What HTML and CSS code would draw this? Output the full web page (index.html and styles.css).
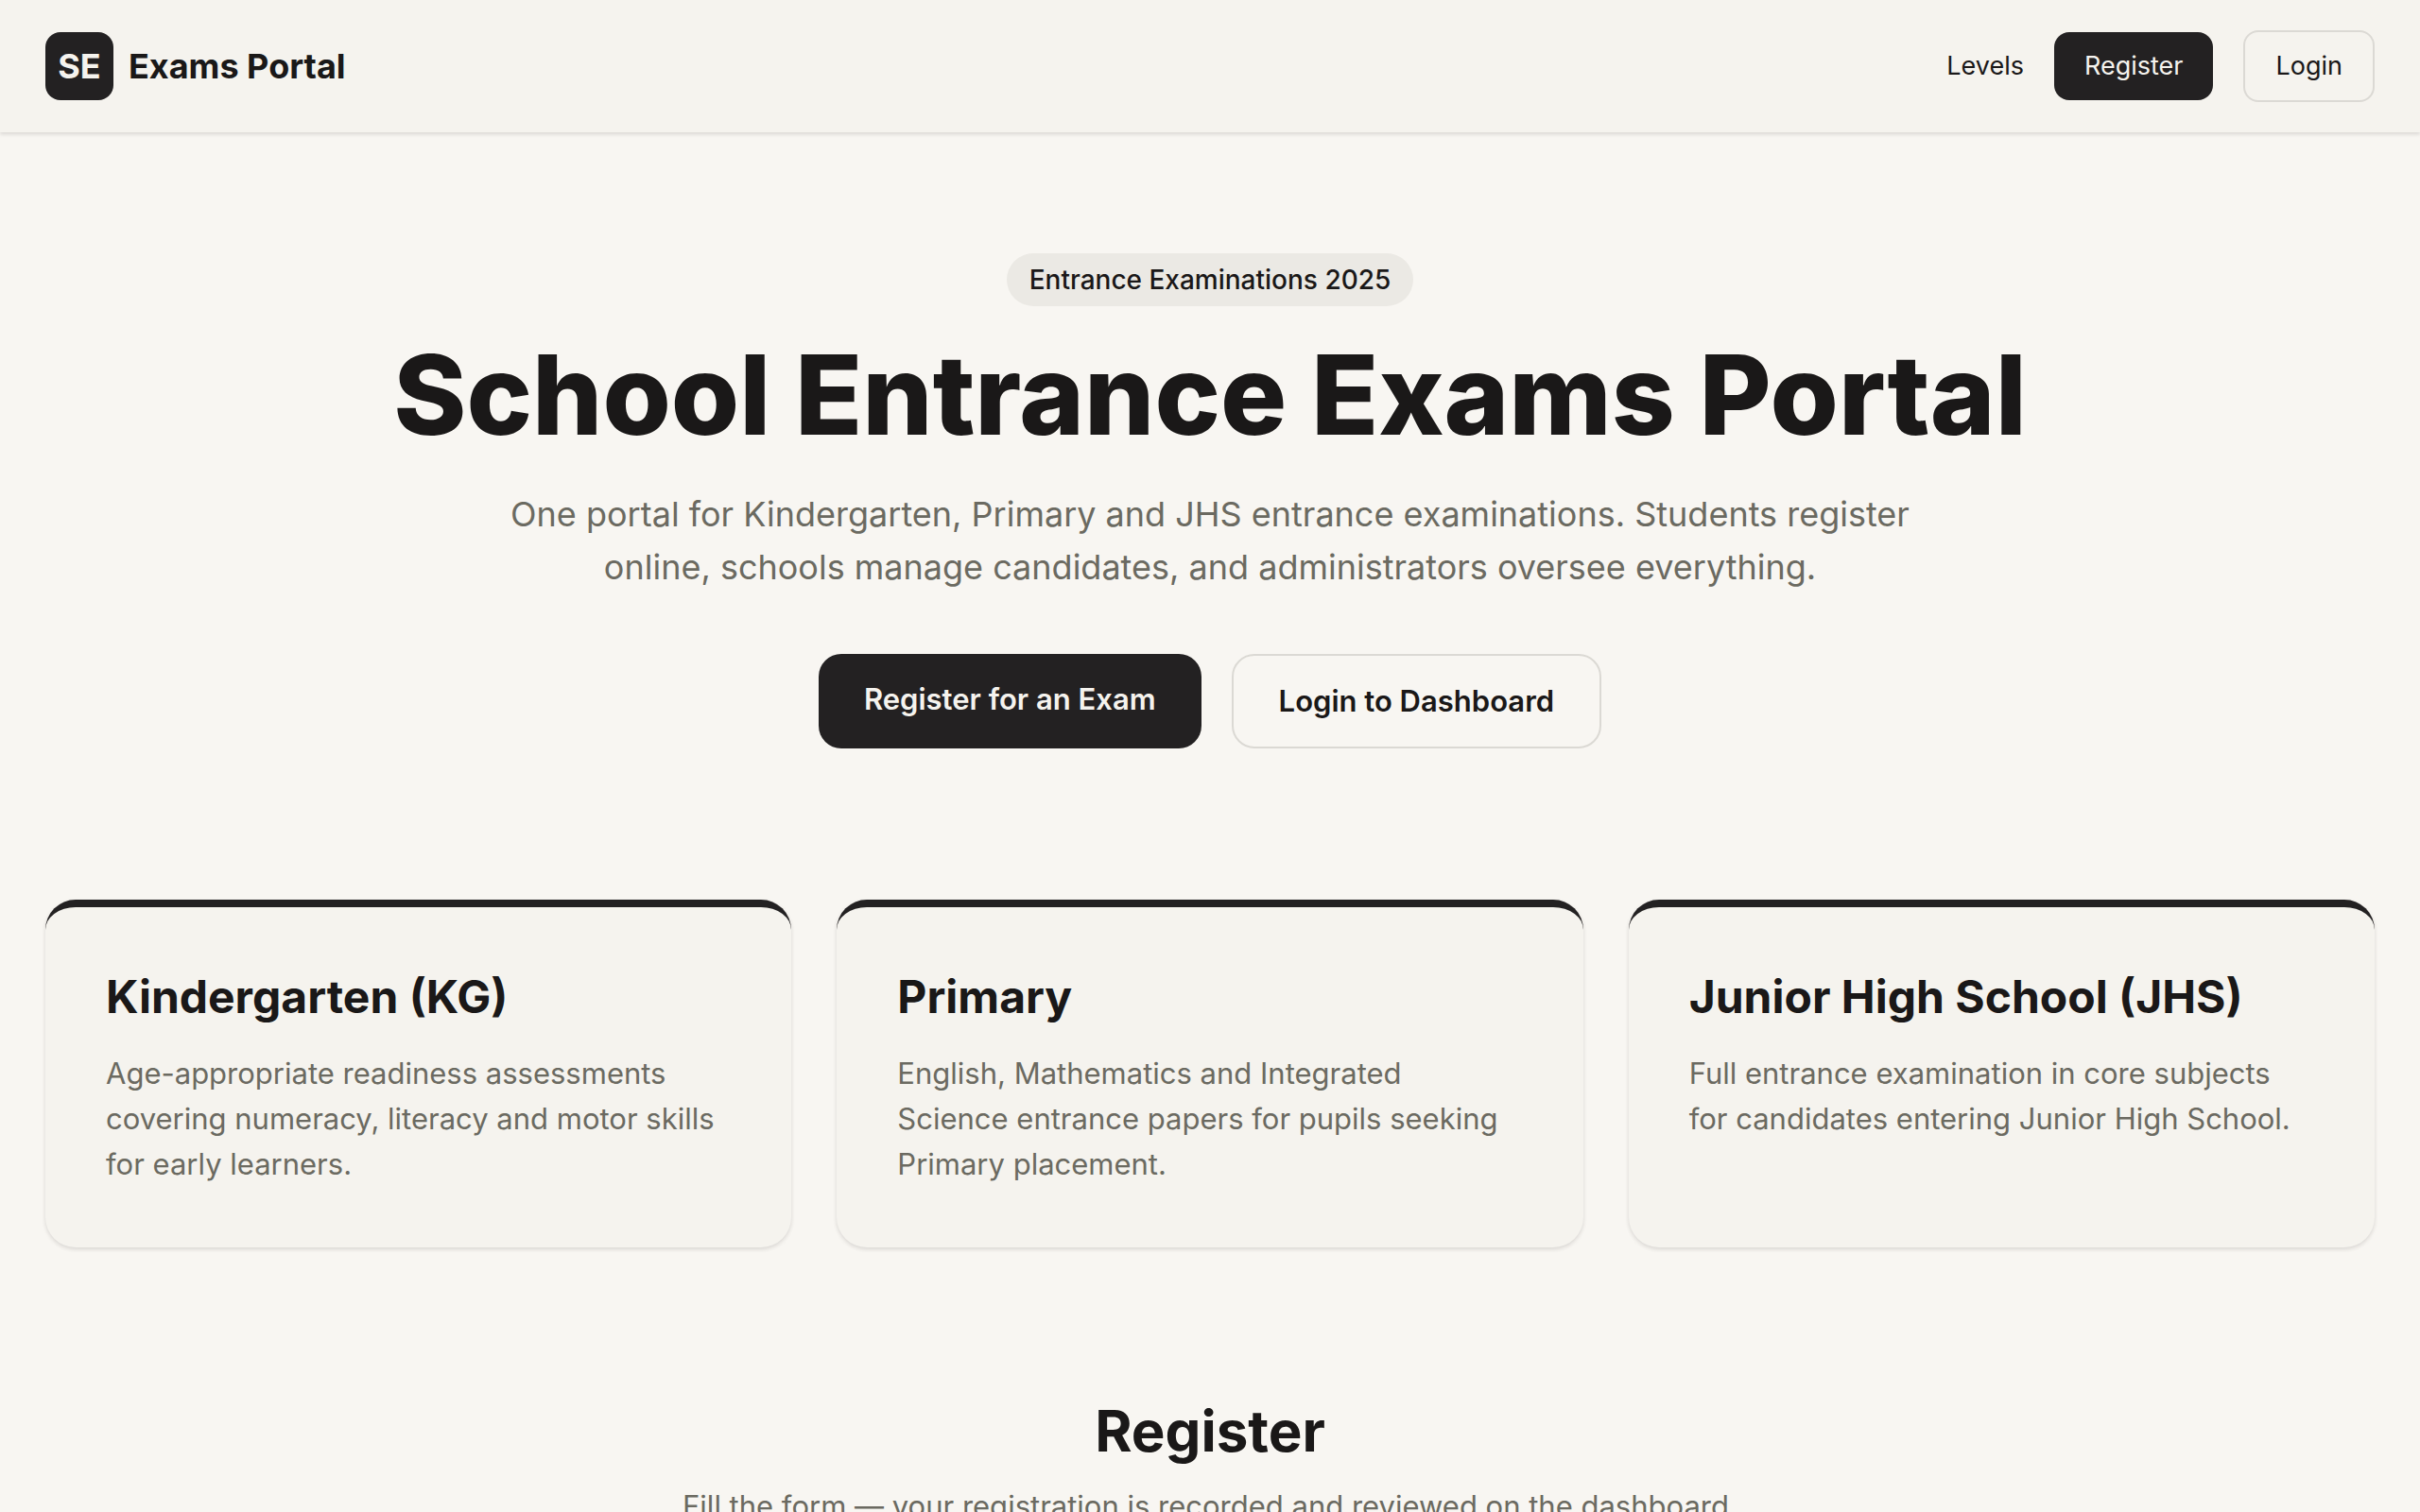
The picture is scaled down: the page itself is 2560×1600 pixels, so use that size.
FILE: index.html
```html
<!DOCTYPE html>
<html lang="en">
<head>
    <meta charset="UTF-8">
    <meta name="viewport" content="width=device-width, initial-scale=1.0">
    <title>School Entrance Exams Portal</title>
    <link rel="stylesheet" href="styles.css">
</head>
<body>
    <header class="header">
        <a href="#" class="brand">
            <span class="brand-logo">SE</span>
            <span class="brand-name">Exams Portal</span>
        </a>
        <nav class="nav">
            <a href="#levels" class="nav-link">Levels</a>
            <a href="#register" class="nav-link nav-primary">Register</a>
            <a href="#login" class="nav-link nav-outline">Login</a>
        </nav>
    </header>

    <main>
        <section class="hero">
            <span class="badge">Entrance Examinations 2025</span>
            <h1>School Entrance Exams Portal</h1>
            <p class="lead">One portal for Kindergarten, Primary and JHS entrance examinations. Students register online, schools manage candidates, and administrators oversee everything.</p>
            <div class="actions">
                <a href="#register" class="btn btn-primary">Register for an Exam</a>
                <a href="#login" class="btn btn-outline">Login to Dashboard</a>
            </div>
        </section>

        <section class="levels" id="levels">
            <article class="card">
                <h3>Kindergarten (KG)</h3>
                <p>Age-appropriate readiness assessments covering numeracy, literacy and motor skills for early learners.</p>
            </article>
            <article class="card">
                <h3>Primary</h3>
                <p>English, Mathematics and Integrated Science entrance papers for pupils seeking Primary placement.</p>
            </article>
            <article class="card">
                <h3>Junior High School (JHS)</h3>
                <p>Full entrance examination in core subjects for candidates entering Junior High School.</p>
            </article>
        </section>

        <section class="register" id="register">
            <h2>Register</h2>
            <p>Fill the form — your registration is recorded and reviewed on the dashboard.</p>
        </section>
    </main>
</body>
</html>
```

FILE: styles.css
```css
* {
    box-sizing: border-box;
    margin: 0;
    padding: 0;
}

body {
    font-family: Inter, "Liberation Sans", sans-serif;
    font-size: 31px;
    line-height: 48px;
    color: #1a1818;
    background: #f8f6f2;
}

a {
    color: inherit;
    text-decoration: none;
}

/* header */
.header {
    display: flex;
    align-items: center;
    justify-content: space-between;
    padding: 32px 48px;
    background: #f5f3ee;
    box-shadow: 0 2px 4px rgba(26, 24, 24, 0.14);
}

.brand {
    display: flex;
    align-items: center;
    gap: 16px;
}

.brand-logo {
    display: flex;
    align-items: center;
    justify-content: center;
    width: 72px;
    height: 72px;
    border-radius: 16px;
    background: #232122;
    color: #f5f3ee;
    font-size: 36px;
    font-weight: 700;
}

.brand-name {
    font-size: 36px;
    font-weight: 700;
}

.nav {
    display: flex;
    align-items: center;
    gap: 32px;
}

.nav-link {
    font-size: 27px;
    line-height: 40px;
}

.nav-primary,
.nav-outline {
    padding: 16px 32px;
    border-radius: 16px;
}

.nav-primary {
    background: #232122;
    color: #f5f3ee;
}

.nav-outline {
    border: 2px solid #dbd9d4;
}

/* hero */
.hero {
    display: flex;
    flex-direction: column;
    align-items: center;
    padding: 128px 48px 160px;
    text-align: center;
}

.badge {
    padding: 8px 24px;
    border-radius: 28px;
    background: #ebe9e4;
    font-size: 28px;
    line-height: 40px;
    font-weight: 500;
}

h1 {
    margin-top: 30px;
    font-size: 117px;
    line-height: 128px;
    font-weight: 800;
}

.lead {
    max-width: 1536px;
    margin-top: 34px;
    font-size: 36px;
    line-height: 56px;
    color: #6b6a61;
}

.actions {
    display: flex;
    gap: 32px;
    margin-top: 64px;
}

.btn {
    padding: 24px 48px;
    border-radius: 24px;
    font-weight: 600;
}

.btn-primary {
    background: #232122;
    color: #f5f3ee;
}

.btn-outline {
    border: 2px solid #dbd9d4;
}

/* level cards */
.levels {
    display: grid;
    grid-template-columns: repeat(3, 1fr);
    gap: 48px;
    padding: 0 48px;
}

.card {
    padding: 64px;
    border-top: 8px solid #232122;
    border-radius: 32px;
    background: #f5f3ee;
    box-shadow: 0 2px 4px rgba(26, 24, 24, 0.14);
}

.card h3 {
    margin-bottom: 26px;
    font-size: 48px;
    line-height: 62px;
    font-weight: 700;
}

.card p {
    padding-right: 8px;
}

.card p,
.register p {
    color: #6b6a61;
}

/* register */
.register {
    padding: 158px 48px 0;
    text-align: center;
}

.register h2 {
    margin-bottom: 20px;
    font-size: 60px;
    line-height: 72px;
    font-weight: 700;
}
```
